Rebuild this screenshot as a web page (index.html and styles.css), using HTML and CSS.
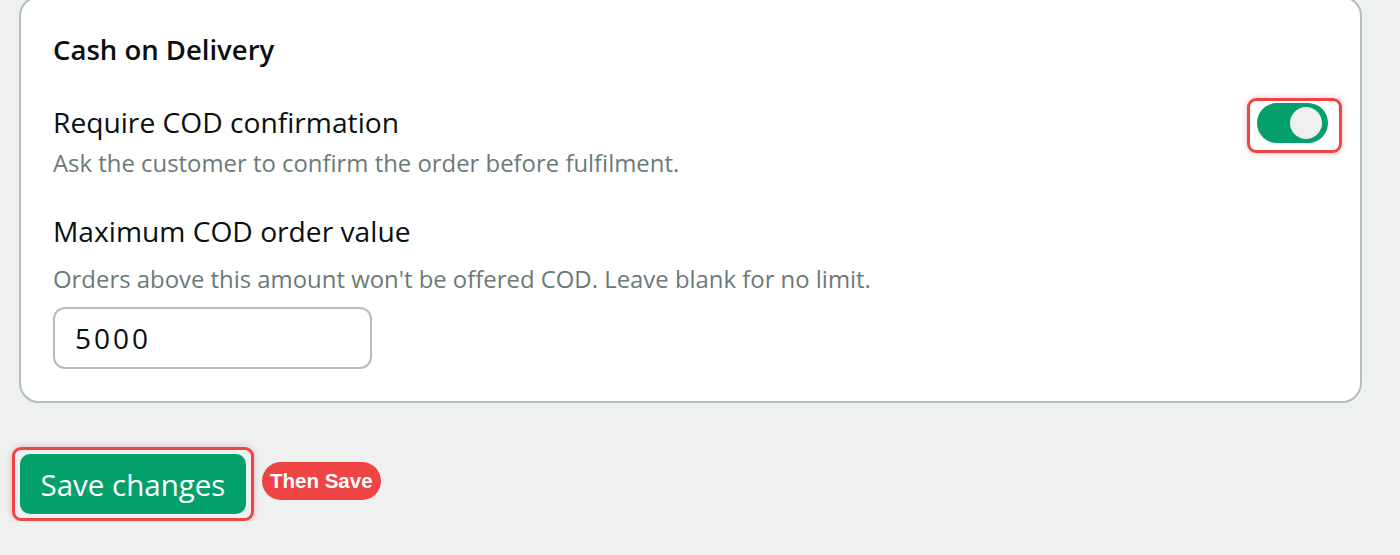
FILE: index.html
```html
<!DOCTYPE html>
<html lang="en">
<head>
  <meta charset="UTF-8" />
  <title>COD Settings</title>
  <meta name="viewport" content="width=device-width, initial-scale=1.0" />
  <link rel="stylesheet" href="styles.css">
</head>
<body>
  <main class="cod-page">

    <section class="cod-card">
      <h2 class="cod-card-title">Cash on Delivery</h2>

      <div class="cod-setting">
        <div class="cod-setting-text">
          <div class="cod-label">Require COD confirmation</div>
          <div class="cod-help">Ask the customer to confirm the order before fulfilment.</div>
        </div>
        <div class="cod-highlight cod-highlight-toggle">
          <label class="cod-toggle">
            <input type="checkbox" checked />
            <span class="cod-toggle-track"></span>
          </label>
        </div>
      </div>

      <div class="cod-field">
        <label class="cod-label" for="cod-max">Maximum COD order value</label>
        <div class="cod-help">Orders above this amount won't be offered COD. Leave blank for no limit.</div>
        <input id="cod-max" class="cod-input" type="text" value="5000" />
      </div>
    </section>

    <div class="cod-actions">
      <div class="cod-highlight cod-highlight-btn">
        <button class="cod-btn">Save changes</button>
      </div>
      <span class="cod-badge">Then Save</span>
    </div>

  </main>
</body>
</html>
```

FILE: styles.css
```css
:root {
  --cod-green: #04a06b;
  --cod-red: #ef4444;
  --cod-border: #b3bfbb;
  --cod-muted: #6b7a76;
  --cod-page-bg: #eef1f0;
}

body {
  margin: 0;
  background: var(--cod-page-bg);
  font-family: "Open Sans", "Noto Sans", sans-serif;
  color: #0b0f0e;
}

.cod-page {
  padding: 0 38px 0 19px;
}

.cod-card {
  margin-top: -4px;
  background: #fff;
  border: 2px solid var(--cod-border);
  border-radius: 20px;
  padding: 34px 32px 32px 32px;
}

.cod-card-title {
  margin: 0 0 36px 0;
  font-size: 27.5px;
  line-height: 36px;
  font-weight: 600;
}

.cod-setting {
  display: flex;
  justify-content: space-between;
  align-items: flex-start;
}

.cod-label {
  display: block;
  font-size: 28.2px;
  line-height: 36px;
  font-weight: 500;
}

.cod-help {
  font-size: 23.9px;
  line-height: 32px;
  color: var(--cod-muted);
}

.cod-setting .cod-help {
  margin-top: 7px;
}

.cod-highlight {
  border: 3px solid var(--cod-red);
  border-radius: 9px;
  box-shadow: 0 0 6px rgba(239, 68, 68, 0.35);
  display: flex;
}

.cod-highlight-toggle {
  padding: 2px 11px 7px 7px;
  margin: -6px -14px 0 0;
}

.cod-toggle input {
  display: none;
}

.cod-toggle-track {
  display: block;
  position: relative;
  width: 71px;
  height: 40px;
  border-radius: 20px;
  background: var(--cod-green);
  cursor: pointer;
}

.cod-toggle-track::after {
  content: "";
  position: absolute;
  top: 4px;
  right: 6px;
  width: 32px;
  height: 32px;
  border-radius: 50%;
  background: var(--cod-page-bg);
}

.cod-field {
  margin-top: 34px;
}

.cod-field .cod-help {
  margin-top: 14px;
}

.cod-input {
  display: block;
  margin-top: 12px;
  box-sizing: border-box;
  width: 319px;
  height: 62px;
  padding: 0 20px;
  border: 2px solid var(--cod-border);
  border-radius: 12px;
  font-family: inherit;
  font-size: 28px;
  letter-spacing: 3px;
  color: #0b0f0e;
  background: #fff;
}

.cod-actions {
  display: flex;
  align-items: center;
  gap: 8px;
  margin-top: 44px;
  margin-left: -7px;
}

.cod-highlight-btn {
  padding: 4px 5px;
}

.cod-btn {
  width: 226px;
  height: 60px;
  border: none;
  border-radius: 10px;
  background: var(--cod-green);
  color: #fff;
  font-family: inherit;
  font-size: 29.5px;
  cursor: pointer;
}

.cod-badge {
  margin-bottom: 6px;
  padding: 0 8px;
  height: 38px;
  line-height: 38px;
  border-radius: 19px;
  background: var(--cod-red);
  color: #fff;
  font-family: "Liberation Sans", Arial, sans-serif;
  font-weight: 700;
  font-size: 20.5px;
}
```
